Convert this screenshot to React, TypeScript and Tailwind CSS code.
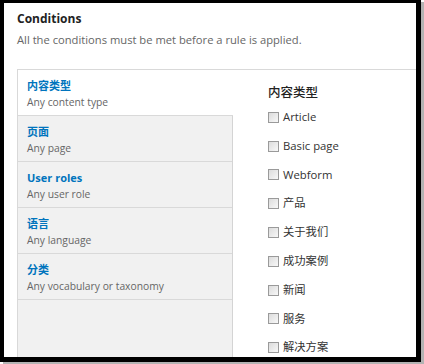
const tabs = [
  { title: '内容类型', summary: 'Any content type' },
  { title: '页面', summary: 'Any page' },
  { title: 'User roles', summary: 'Any user role' },
  { title: '语言', summary: 'Any language' },
  { title: '分类', summary: 'Any vocabulary or taxonomy' },
];

const options = ['Article', 'Basic page', 'Webform', '产品', '关于我们', '成功案例', '新闻', '服务', '解决方案'];

const font = "font-['Open_Sans','Noto_Sans_CJK_SC',sans-serif]";

export default function App() {
  return (
    <div className={`h-[364px] w-[424px] overflow-hidden bg-white ${font}`}>
      <div className="box-border h-[362px] w-[421px] border-b-[5px] border-l-4 border-r-[5px] border-t-[3px] border-black bg-white shadow-[3px_2px_0_#b3b3b3]">
        <div className="flex h-full flex-col overflow-hidden pl-[13px]">
          {/* Header */}
          <h2 className="pt-[6px] text-[12px] font-bold leading-[20px] text-[#222]">Conditions</h2>
          <p className="mt-[2px] text-[11.2px] leading-[18px] text-[#666]">All the conditions must be met before a rule is applied.</p>

          {/* Vertical tabs */}
          <div className="mt-[20px] flex flex-1 border-l border-t border-[#d9d9d9]">
            <ul className="box-border flex w-[215px] shrink-0 flex-col border-r border-[#d4d4d4] bg-[#f1f1f1]">
              {tabs.map((tab, i) => (
                <li
                  key={tab.summary}
                  className={`box-border h-[46px] border-b border-[#d9d9d9] pl-[9px] pt-[8px] ${
                    i === 0 ? 'relative -mr-px bg-white' : ''
                  }`}
                >
                  <div className="text-[11px] font-bold leading-[16px] text-[#0074bd]">{tab.title}</div>
                  <div className="text-[10.3px] leading-[16px] text-[#666]">{tab.summary}</div>
                </li>
              ))}
            </ul>

            <div className="flex-1 pl-[35px] pt-[13px]">
              <h3 className="text-[12.5px] font-medium leading-[20px] text-[#222]">内容类型</h3>
              <div className="flex flex-col">
                {options.map((opt) => (
                  <label key={opt} className="flex h-[28.8px] items-center gap-[4px] text-[11.3px] text-[#333]">
                    <span className="box-border h-[11px] w-[11px] shrink-0 border border-[#9a9a9a] bg-gradient-to-br from-[#dcdcdc] to-[#f8f8f8]" />
                    {opt}
                  </label>
                ))}
              </div>
            </div>
          </div>
        </div>
      </div>
    </div>
  );
}
